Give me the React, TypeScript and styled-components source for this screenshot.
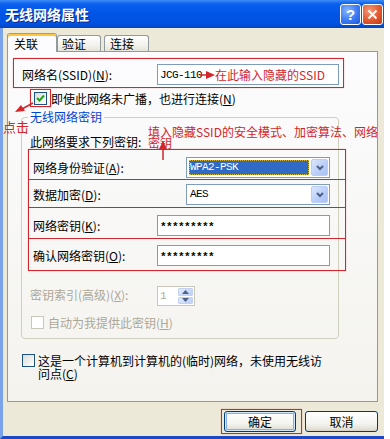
import React from "react";
import styled, { createGlobalStyle } from "styled-components";

const RED = "#d2262a";

const GlobalStyle = createGlobalStyle`
	html, body {
		margin: 0;
		padding: 0;
		background: #fff;
	}
	body {
		font-family: "Noto Sans CJK SC", "Noto Sans", sans-serif;
		font-size: 12px;
		color: #000;
	}
	* {
		box-sizing: border-box;
	}
`;

const Window = styled.div`
	width: 384px;
	height: 439px;
	display: flex;
	flex-direction: column;
`;
const TitleBar = styled.div`
	height: 28px;
	flex: none;
	display: flex;
	align-items: center;
	justify-content: space-between;
	padding: 0 1px 0 5px;
	background: linear-gradient(#3d8cf6 0%, #0b5fee 14%, #0055e6 50%, #0052e0 85%, #0444c0 100%);
`;
const Title = styled.span`
	color: #fff;
	font-weight: 700;
	font-size: 14px;
	text-shadow: 1px 1px 0 #0a2a8c;
`;
const TitleButtons = styled.div`
	display: flex;
	gap: 1px;
`;
const CaptionButton = styled.div<{ $close?: boolean }>`
	width: 21px;
	height: 21px;
	border: 1px solid #fff;
	border-radius: 3px;
	display: flex;
	align-items: center;
	justify-content: center;
	color: #fff;
	font-family: "Liberation Sans", sans-serif;
	font-weight: 700;
	font-size: 15px;
	background: ${p =>
		p.$close
			? "radial-gradient(circle at 35% 30%, #f39a7a, #e2582f 55%, #c2380f)"
			: "radial-gradient(circle at 35% 30%, #8ab6ff, #3b7af4 55%, #1c58d8)"};
`;

const Body = styled.div`
	flex: 1;
	position: relative;
	display: flex;
	flex-direction: column;
	background: #ece9d8;
	border-left: 3px solid #7aa3ec;
	border-bottom: 3px solid #1a48c6;
	padding: 5px 6px 0 4px;
`;

const TabRow = styled.div`
	height: 18px;
	display: flex;
	align-items: flex-end;
	position: relative;
	z-index: 1;
`;
const Tab = styled.div<{ $active?: boolean; $w: number; $ml: number; $pl: number }>`
	width: ${p => p.$w}px;
	margin-left: ${p => p.$ml}px;
	padding-left: ${p => p.$pl}px;
	height: ${p => (p.$active ? 19 : 16)}px;
	margin-bottom: ${p => (p.$active ? -1 : 0)}px;
	border: 1px solid #919b9c;
	border-bottom: none;
	border-top-color: ${p => (p.$active ? "#e68b2c" : "#919b9c")};
	border-radius: 3px 3px 0 0;
	background: ${p => (p.$active ? "#fcfcfe" : "linear-gradient(#fff, #f3f2ec 60%, #e6e4da)")};
	box-shadow: ${p => (p.$active ? "inset 0 2px 0 #ffc83c" : "none")};
	font-size: 12px;
	line-height: ${p => (p.$active ? 19 : 16)}px;
`;

const Panel = styled.div`
	height: 351px;
	border: 1px solid #919b9c;
	background: linear-gradient(#fcfcfe, #f4f3ee);
	padding: 6px 0 0 5px;
	display: flex;
	flex-direction: column;
	align-items: flex-start;
`;

const SsidRow = styled.div`
	width: 331px;
	height: 30px;
	border: 1px solid ${RED};
	box-shadow: 0 0 1px rgba(230, 80, 80, 0.6);
	display: flex;
	align-items: flex-start;
	padding: 5px 0 0 8px;
`;
const FieldLabel = styled.span<{ $w: number; $h?: number; $muted?: boolean }>`
	width: ${p => p.$w}px;
	flex: none;
	line-height: ${p => p.$h ?? 21}px;
	white-space: nowrap;
	color: ${p => (p.$muted ? "#aca899" : "#000")};
	u {
		text-decoration: underline;
	}
`;
const TextField = styled.div<{ $w: number }>`
	width: ${p => p.$w}px;
	height: 21px;
	border: 1px solid #7f9db9;
	background: #fff;
	display: flex;
	align-items: center;
	padding-left: 2px;
	font-family: "Liberation Mono", monospace;
	font-size: 11px;
	letter-spacing: -0.6px;
	white-space: nowrap;
`;
const Secret = styled.span`
	font-family: "Liberation Mono", monospace;
	font-size: 11px;
	font-weight: 700;
	letter-spacing: -0.6px;
	padding-top: 3px;
`;
const RedNote = styled.span<{ $size?: number }>`
	color: ${RED};
	font-family: "Noto Sans CJK SC", sans-serif;
	font-size: ${p => p.$size ?? 12}px;
	letter-spacing: 0;
`;

const CheckRow = styled.div<{ $mt: number; $ml: number }>`
	margin-top: ${p => p.$mt}px;
	margin-left: ${p => p.$ml}px;
	display: flex;
	align-items: center;
`;
const CheckFrame = styled.div`
	width: 21px;
	height: 18px;
	border: 1px solid ${RED};
	box-shadow: 0 0 1px rgba(230, 80, 80, 0.6);
	display: flex;
	align-items: center;
	padding-left: 3px;
`;
const Box = styled.div<{ $disabled?: boolean }>`
	width: 13px;
	height: 13px;
	flex: none;
	border: 1px solid ${p => (p.$disabled ? "#cac8bb" : "#1c5180")};
	background: ${p => (p.$disabled ? "#fff" : "linear-gradient(135deg, #dcdcd7, #fff)")};
	display: flex;
	align-items: center;
	justify-content: center;
`;
const CheckText = styled.span<{ $muted?: boolean; $ml?: number }>`
	margin-left: ${p => p.$ml ?? 0}px;
	color: ${p => (p.$muted ? "#aca899" : "#000")};
	line-height: 13px;
	white-space: nowrap;
`;

const Group = styled.fieldset`
	margin: 3px 0 0 8px;
	width: 318px;
	height: 229px;
	border: 1px solid #d0d0bf;
	border-radius: 4px;
	padding: 0 0 0 6px;
	min-inline-size: 0;
	display: flex;
	flex-direction: column;
	align-items: flex-start;
`;
const Legend = styled.legend`
	padding: 0 2px;
	color: #0046d5;
	line-height: 14px;
	font-size: 12px;
`;
const KeyNote = styled.div`
	margin: 11px 0 0 2px;
	line-height: 14px;
`;
const KeyTable = styled.div`
	width: 318px;
	border: 1px solid ${RED};
	box-shadow: 0 0 1px rgba(230, 80, 80, 0.6);
	flex: none;
`;
const KeyRow = styled.div<{ $h: number; $pt: number; $first?: boolean }>`
	height: ${p => p.$h}px;
	padding: ${p => p.$pt}px 0 0 4px;
	border-top: ${p => (p.$first ? "none" : `1px solid ${RED}`)};
	display: flex;
	align-items: flex-start;
`;
const Select = styled.div`
	width: 144px;
	height: 21px;
	border: 1px solid #7f9db9;
	background: #fff;
	padding: 1px;
	display: flex;
	gap: 2px;
`;
const SelectValue = styled.div<{ $selected?: boolean }>`
	flex: 1;
	margin: 1px 0 1px 1px;
	padding-left: 1px;
	font-family: "Liberation Mono", monospace;
	font-size: 11px;
	letter-spacing: -0.6px;
	line-height: 15px;
	color: ${p => (p.$selected ? "#fff" : "#000")};
	background: ${p => (p.$selected ? "#316ac5" : "transparent")};
	outline: ${p => (p.$selected ? "1px dotted #d6b43a" : "none")};
	outline-offset: -1px;
`;
const DropButton = styled.div`
	width: 17px;
	border: 1px solid #b9cdf7;
	border-radius: 2px;
	background: linear-gradient(135deg, #dbe6fd, #b8cdf8 60%, #aac0f4);
	display: flex;
	align-items: center;
	justify-content: center;
`;

const IndexRow = styled.div`
	margin: 15px 0 0 2px;
	display: flex;
	align-items: flex-start;
`;
const Spinner = styled.div`
	width: 38px;
	height: 20px;
	border: 1px solid #c9c7ba;
	background: #fff;
	display: flex;
	justify-content: space-between;
	padding: 1px 1px 1px 2px;
	font-family: "Liberation Mono", monospace;
	font-size: 11px;
	color: #aca899;
	line-height: 17px;
`;
const SpinButtons = styled.div`
	width: 15px;
	display: flex;
	flex-direction: column;
	gap: 1px;
`;
const SpinButton = styled.div`
	flex: 1;
	border: 1px solid #c4d2f2;
	border-radius: 1px;
	background: linear-gradient(135deg, #e2ebfd, #bccff8);
	display: flex;
	align-items: center;
	justify-content: center;
`;

const AdHocRow = styled.div`
	margin: 15px 0 0 9px;
	display: flex;
	align-items: flex-start;
	gap: 3px;
`;
const AdHocText = styled.span`
	line-height: 13px;
	margin-top: -0.5px;
`;

const ButtonRow = styled.div`
	margin-top: 7px;
	height: 25px;
	display: flex;
	align-items: center;
	justify-content: flex-end;
	gap: 3px;
`;
const DefaultFrame = styled.div`
	border: 1px solid ${RED};
	box-shadow: 0 0 1px rgba(230, 80, 80, 0.6);
	padding: 1px 5px 1px 2px;
`;
const XPButton = styled.button<{ $w: number; $default?: boolean }>`
	width: ${p => p.$w}px;
	height: 21px;
	display: block;
	border: 1px solid #003c74;
	border-radius: 3px;
	background: linear-gradient(#fff, #f4f4f0 60%, #e3e0d6 90%, #d6d0c5);
	box-shadow: ${p => (p.$default ? "inset 0 0 0 1px #cee7ff, inset 0 0 0 2px #89adec" : "none")};
	font-family: "Noto Sans CJK SC", sans-serif;
	font-size: 12px;
	color: #000;
	padding: 0;
	line-height: 18px;
`;

const ClickNote = styled.span`
	position: absolute;
	left: 0;
	top: 92px;
	color: ${RED};
	font-size: 13px;
	line-height: 14px;
`;
const ModeNote = styled.div`
	position: absolute;
	left: 145px;
	top: 98px;
	color: ${RED};
	font-size: 12px;
	line-height: 11px;
	white-space: nowrap;
`;
const Overlay = styled.svg<{ $x: number; $y: number }>`
	position: absolute;
	left: ${p => p.$x}px;
	top: ${p => p.$y}px;
	overflow: visible;
`;

const Check = () => (
	<svg width="9" height="9" viewBox="0 0 9 9">
		<path d="M1 4 L3.5 6.5 L8 1.5" stroke="#21a121" strokeWidth="2" fill="none" />
	</svg>
);

const Chevron = ({ up }: { up?: boolean }) => (
	<svg width="7" height="4" viewBox="0 0 7 4">
		<path d={up ? "M0 4 L3.5 0 L7 4 Z" : "M0 0 L3.5 4 L7 0 Z"} fill="#4d6185" />
	</svg>
);

const DropChevron = () => (
	<svg width="8" height="6" viewBox="0 0 8 6">
		<path d="M1 1 L4 4 L7 1" stroke="#4d6185" strokeWidth="2" fill="none" />
	</svg>
);

function App() {
	return (
		<>
			<GlobalStyle />
			<Window>
				<TitleBar>
					<Title>无线网络属性</Title>
					<TitleButtons>
						<CaptionButton>?</CaptionButton>
						<CaptionButton $close>
							<svg width="11" height="11" viewBox="0 0 11 11">
								<path d="M1.5 1.5 L9.5 9.5 M9.5 1.5 L1.5 9.5" stroke="#fff" strokeWidth="2" />
							</svg>
						</CaptionButton>
					</TitleButtons>
				</TitleBar>
				<Body>
					<TabRow>
						<Tab $active $w={50} $ml={0} $pl={6}>关联</Tab>
						<Tab $w={44} $ml={0} $pl={4}>验证</Tab>
						<Tab $w={45} $ml={3} $pl={5}>连接</Tab>
					</TabRow>
					<Panel>
						<SsidRow>
							<FieldLabel $w={135}>
								网络名(SSID)(<u>N</u>):
							</FieldLabel>
							<TextField $w={182}>
								JCG-110
								<svg width="15" height="8" viewBox="0 0 15 8" style={{ marginLeft: -2 }}>
									<path d="M0 4 H8" stroke={RED} strokeWidth="1.5" />
									<path d="M6 0 L15 4 L6 8 Z" fill={RED} />
								</svg>
								<RedNote>在此输入隐藏的SSID</RedNote>
							</TextField>
						</SsidRow>

						<CheckRow $mt={1} $ml={17}>
							<CheckFrame>
								<Box>
									<Check />
								</Box>
							</CheckFrame>
							<CheckText>
								即使此网络未广播，也进行连接(<u>N</u>)
							</CheckText>
						</CheckRow>

						<Group>
							<Legend>无线网络密钥</Legend>
							<KeyNote>此网络要求下列密钥:</KeyNote>
							<KeyTable>
								<KeyRow $first $h={29} $pt={7}>
									<FieldLabel $w={153}>
										网络身份验证(<u>A</u>):
									</FieldLabel>
									<Select>
										<SelectValue $selected>WPA2-PSK</SelectValue>
										<DropButton>
											<DropChevron />
										</DropButton>
									</Select>
								</KeyRow>
								<KeyRow $h={28} $pt={4}>
									<FieldLabel $w={153}>
										数据加密(<u>D</u>):
									</FieldLabel>
									<Select>
										<SelectValue>AES</SelectValue>
										<DropButton>
											<DropChevron />
										</DropButton>
									</Select>
								</KeyRow>
								<KeyRow $h={31} $pt={7}>
									<FieldLabel $w={124}>
										网络密钥(<u>K</u>):
									</FieldLabel>
									<TextField $w={173}>
										<Secret>*********</Secret>
									</TextField>
								</KeyRow>
								<KeyRow $h={32} $pt={6}>
									<FieldLabel $w={124}>
										确认网络密钥(<u>O</u>):
									</FieldLabel>
									<TextField $w={173}>
										<Secret>*********</Secret>
									</TextField>
								</KeyRow>
							</KeyTable>

							<IndexRow>
								<FieldLabel $w={127} $h={18} $muted>
									密钥索引(高级)(<u>X</u>):
								</FieldLabel>
								<Spinner>
									1
									<SpinButtons>
										<SpinButton>
											<Chevron up />
										</SpinButton>
										<SpinButton>
											<Chevron />
										</SpinButton>
									</SpinButtons>
								</Spinner>
							</IndexRow>

							<CheckRow $mt={10} $ml={3}>
								<Box $disabled />
								<CheckText $muted $ml={4}>
									自动为我提供此密钥(<u>H</u>)
								</CheckText>
							</CheckRow>
						</Group>

						<AdHocRow>
							<Box />
							<AdHocText>
								这是一个计算机到计算机的(临时)网络，未使用无线访
								<br />
								问点(<u>C</u>)
							</AdHocText>
						</AdHocRow>
					</Panel>

					<ButtonRow>
						<DefaultFrame>
							<XPButton $w={72} $default>确定</XPButton>
						</DefaultFrame>
						<XPButton $w={73}>取消</XPButton>
					</ButtonRow>

					<ClickNote>点击</ClickNote>
					<Overlay $x={9} $y={72} width="24" height="16" viewBox="0 0 24 16">
						<path d="M21 3 L10 9" stroke={RED} strokeWidth="1.5" />
						<path d="M3 12 L9 5 L13 11 Z" fill={RED} />
					</Overlay>
					<ModeNote>
						填入隐藏SSID的安全模式、加密算法、网络
						<br />
						密钥
					</ModeNote>
					<Overlay $x={155} $y={113} width="10" height="20" viewBox="0 0 10 20">
						<path d="M5 6 V19" stroke={RED} strokeWidth="1.5" />
						<path d="M5 0 L9 8 L1 8 Z" fill={RED} />
					</Overlay>
				</Body>
			</Window>
		</>
	);
}

export default App;
